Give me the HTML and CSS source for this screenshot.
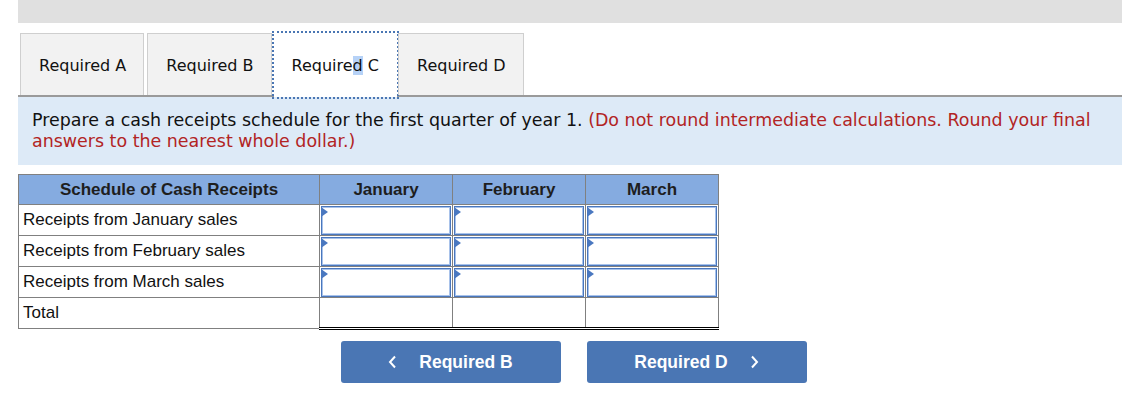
FILE: index.html
```html
<!DOCTYPE html>
<html>
<head>
<meta charset="utf-8">
<link rel="stylesheet" href="styles.css">
</head>
<body>
<div class="page">
  <div class="topbar"></div>
  <div class="tabs">
    <div class="tab"><span>Required A</span></div>
    <div class="tab"><span>Required B</span></div>
    <div class="tab active"><span>Require<span class="sel">d</span> C</span></div>
    <div class="tab"><span>Required D</span></div>
  </div>
  <div class="instructions">
    Prepare a cash receipts schedule for the first quarter of year 1. <span class="note">(Do not round intermediate calculations. Round your final answers to the nearest whole dollar.)</span>
  </div>
  <table class="sched">
    <colgroup>
      <col class="c-label"><col class="c-num"><col class="c-num"><col class="c-num">
    </colgroup>
    <thead>
      <tr><th>Schedule of Cash Receipts</th><th>January</th><th>February</th><th>March</th></tr>
    </thead>
    <tbody>
      <tr><td class="label">Receipts from January sales</td><td class="in"><div class="box"></div></td><td class="in"><div class="box"></div></td><td class="in"><div class="box"></div></td></tr>
      <tr><td class="label">Receipts from February sales</td><td class="in"><div class="box"></div></td><td class="in"><div class="box"></div></td><td class="in"><div class="box"></div></td></tr>
      <tr><td class="label">Receipts from March sales</td><td class="in"><div class="box"></div></td><td class="in"><div class="box"></div></td><td class="in"><div class="box"></div></td></tr>
      <tr class="total"><td class="label">Total</td><td class="tot"></td><td class="tot"></td><td class="tot"></td></tr>
    </tbody>
  </table>
  <div class="nav">
    <div class="btn"><svg class="chev" width="9" height="14" viewBox="0 0 9 14"><polyline points="7,1.5 2,7 7,12.5" fill="none" stroke="#fff" stroke-width="2"/></svg><span>Required B</span></div>
    <div class="btn"><span>Required D</span><svg class="chev" width="9" height="14" viewBox="0 0 9 14"><polyline points="2,1.5 7,7 2,12.5" fill="none" stroke="#fff" stroke-width="2"/></svg></div>
  </div>
</div>
</body>
</html>
```
FILE: styles.css
```css
html, body {
  margin: 0;
  padding: 0;
  background: #fff;
}
.page {
  padding-left: 18px;
}
.topbar {
  height: 23px;
  background: #e0e0e0;
}
.tabs {
  display: flex;
  margin-top: 10px;
  height: 62px;
  padding-left: 2px;
  border-bottom: 2px solid #9a9a9a;
  font-family: "DejaVu Sans", Verdana, sans-serif;
  font-size: 16px;
  color: #111;
}
.tab {
  display: flex;
  align-items: center;
  padding: 2px 17px 0 18px;
  margin-right: 3px;
  background: #f2f2f2;
  border: 1px solid #cfcfcf;
  border-bottom: none;
}
.tab.active {
  background: #fff;
  outline: 2px dotted #4a76b3;
  outline-offset: 0;
  margin-bottom: -2px;
  margin-left: -1px;
  margin-right: 1px;
  border-color: #fff;
  padding: 2px 17px 2px 17px;
}
.sel {
  background: #b6d2f7;
}
.instructions {
  background: #ddeaf7;
  padding: 13px 14px 13px;
  font-family: "DejaVu Sans", Verdana, sans-serif;
  font-size: 17.45px;
  line-height: 21px;
  color: #111;
}
.note {
  color: #b22424;
}
.sched {
  margin-top: 9px;
  border-collapse: collapse;
  width: 701px;
  table-layout: fixed;
  font-family: "Liberation Sans", Arial, sans-serif;
  font-size: 17px;
  color: #111;
}
.c-label { width: 301px; }
.c-num { width: 133px; }
.sched th {
  background: #85abe0;
  border: 1px solid #808080;
  height: 30px;
  padding: 0;
  box-sizing: border-box;
  font-weight: bold;
  color: #1e1e1e;
  text-align: center;
}
.sched td {
  border: 1px solid #808080;
  height: 31px;
  padding: 0;
  box-sizing: border-box;
}
.sched td.label {
  padding-left: 4px;
}
.sched td.in {
  padding: 1px 1px 0 1px;
  position: relative;
}
.box {
  height: 27px;
  border: 1px solid #4a77bd;
  box-shadow: inset 0 0 0 1px #a8c2ea;
  background: #fff;
}
.sched td.in::before {
  content: "";
  position: absolute;
  left: 1px;
  top: 2px;
  border-left: 7px solid #4a78c0;
  border-top: 5px solid transparent;
  border-bottom: 5px solid transparent;
}
.sched td.tot {
  border-top: 1px solid #000;
  border-bottom: 3px double #000;
}
.nav {
  display: flex;
  justify-content: center;
  gap: 26px;
  margin-top: 11px;
  padding-left: 7px;
}
.btn {
  width: 220px;
  height: 42px;
  background: #4a76b4;
  border-radius: 3px;
  display: flex;
  align-items: center;
  justify-content: center;
  gap: 22px;
  font-family: "Liberation Sans", Arial, sans-serif;
  font-weight: bold;
  font-size: 17.5px;
  color: #fff;
}
.chev {
  display: block;
}
```
